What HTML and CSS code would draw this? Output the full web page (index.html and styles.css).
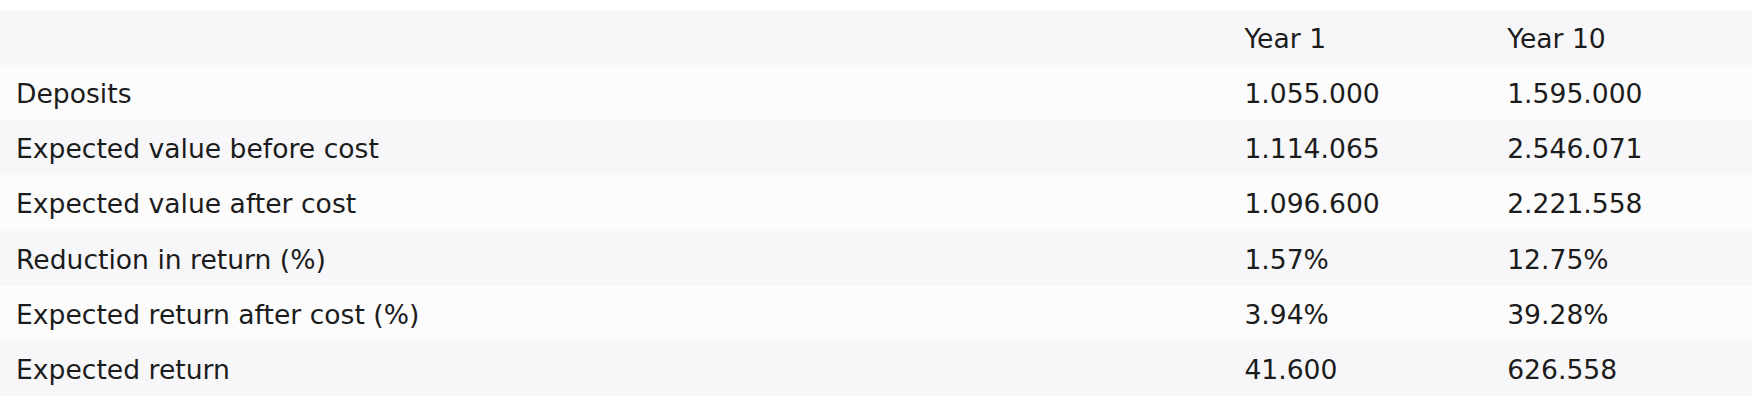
FILE: index.html
```html
<!DOCTYPE html>
<html lang="en">
<head>
  <meta charset="UTF-8" />
  <meta name="viewport" content="width=device-width, initial-scale=1.0"/>
  <title>Cost overview</title>
  <link rel="stylesheet" href="styles.css">
</head>
<body>

  <!-- Cost table -->
  <table class="tabla-costos">
    <colgroup>
      <col class="col-label">
      <col class="col-year">
      <col class="col-year">
    </colgroup>
    <thead>
      <tr>
        <th></th>
        <th>Year 1</th>
        <th>Year 10</th>
      </tr>
    </thead>
    <tbody>
      <tr>
        <td>Deposits</td>
        <td>1.055.000</td>
        <td>1.595.000</td>
      </tr>
      <tr>
        <td>Expected value before cost</td>
        <td>1.114.065</td>
        <td>2.546.071</td>
      </tr>
      <tr>
        <td>Expected value after cost</td>
        <td>1.096.600</td>
        <td>2.221.558</td>
      </tr>
      <tr>
        <td>Reduction in return (%)</td>
        <td>1.57%</td>
        <td>12.75%</td>
      </tr>
      <tr>
        <td>Expected return after cost (%)</td>
        <td>3.94%</td>
        <td>39.28%</td>
      </tr>
      <tr>
        <td>Expected return</td>
        <td>41.600</td>
        <td>626.558</td>
      </tr>
    </tbody>
  </table>

</body>
</html>
```

FILE: styles.css
```css
body {
  background-color: #ffffff;
  color: #1c1c1c;
  font-family: 'DejaVu Sans', sans-serif;
  margin: 0;
  padding-top: 10px;
}

.tabla-costos {
  width: 1752px;
  border-collapse: collapse;
  table-layout: fixed;
  font-size: 26.6px;
}

.col-label {
  width: 70%;
}

.col-year {
  width: 15%;
}

.tabla-costos tr {
  height: 55.14px;
}

.tabla-costos th,
.tabla-costos td {
  padding: 2px 16px 0;
  text-align: left;
  font-weight: normal;
  vertical-align: middle;
  white-space: nowrap;
}

.tabla-costos th + th,
.tabla-costos td + td {
  padding-left: 18px;
}

.tabla-costos thead tr,
.tabla-costos tbody tr:nth-child(even) {
  background-color: #f7f7f9;
}

.tabla-costos tbody tr:nth-child(odd) {
  background-color: #fcfcfc;
}
```
